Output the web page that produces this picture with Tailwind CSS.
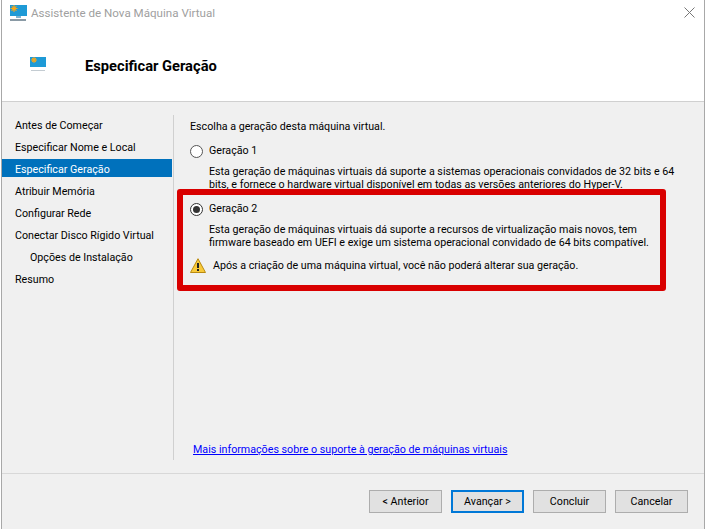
<!DOCTYPE html>
<html lang="pt">
<head>
<meta charset="UTF-8">
<title>Assistente de Nova Máquina Virtual</title>
<script src="https://cdn.jsdelivr.net/npm/@tailwindcss/browser@4"></script>
</head>
<body class="bg-white font-['Roboto',sans-serif] text-[10.7px] leading-[14px] text-black overflow-hidden">
<div class="w-[704px] h-[529px] ml-[1px] flex flex-col border-l border-r border-[#a8a8a8] bg-white">

    <!-- barra de titulo -->
    <div class="h-[26px] flex items-center shrink-0 pl-[8px] pr-[9px]">
        <svg width="17" height="16" viewBox="0 0 17 16">
            <rect x="0" y="0" width="17" height="11" fill="#1e9ad6"/>
            <path d="M4 0V7M0.5 3.5H7.5M1.5 1L6.5 6M6.5 1L1.5 6" stroke="#f5a81c" stroke-width="1"/>
            <circle cx="4" cy="3.5" r="2" fill="#f5a81c"/>
            <rect x="6" y="11" width="5" height="2" fill="#7fb4d0"/>
            <rect x="0" y="14" width="16" height="2" fill="#8a9aa5"/>
        </svg>
        <span class="ml-[4px] text-[#a0a0a0] text-[11.6px]">Assistente de Nova Máquina Virtual</span>
        <svg class="ml-auto mb-[2px]" width="11" height="11" viewBox="0 0 11 11"><path d="M0.5 0.5L10.5 10.5M10.5 0.5L0.5 10.5" stroke="#777" stroke-width="1"/></svg>
    </div>

    <!-- cabecalho -->
    <div class="h-[76px] flex items-center shrink-0 border-b border-[#d0d0d0] pl-[28px]">
        <svg width="16" height="15" viewBox="0 0 16 15" class="mt-[2px]">
            <rect x="0" y="0" width="16" height="10" fill="#1e9ad6"/>
            <path d="M4 0V6M1 3H7M2 1L6 5M6 1L2 5" stroke="#f5a81c" stroke-width="1"/>
            <circle cx="4" cy="3" r="1.7" fill="#f5a81c"/>
            <rect x="1" y="13" width="14" height="1" fill="#c4ccd2"/>
        </svg>
        <h1 class="ml-[39px] mt-[4px] text-[14.7px] font-bold">Especificar Geração</h1>
    </div>

    <!-- corpo -->
    <div class="flex-1 bg-[#f0f0f0] flex flex-col">
        <div class="flex-1 flex pt-[13px] pb-[13px]">
            <ul class="w-[172px] shrink-0 border-r border-[#d0d0d0]">
                <li class="h-[18px] mb-[4px] pt-[4px] pl-[13px]">Antes de Começar</li>
                <li class="h-[18px] mb-[4px] pt-[4px] pl-[13px]">Especificar Nome e Local</li>
                <li class="h-[18px] mb-[4px] pt-[4px] pl-[13px] mr-[1px] bg-[#0071bc] text-white">Especificar Geração</li>
                <li class="h-[18px] mb-[4px] pt-[4px] pl-[13px]">Atribuir Memória</li>
                <li class="h-[18px] mb-[4px] pt-[4px] pl-[13px]">Configurar Rede</li>
                <li class="h-[18px] mb-[4px] pt-[4px] pl-[13px]">Conectar Disco Rígido Virtual</li>
                <li class="h-[18px] mb-[4px] pt-[4px] pl-[28px]">Opções de Instalação</li>
                <li class="h-[18px] mb-[4px] pt-[4px] pl-[13px]">Resumo</li>
            </ul>
            <div class="flex-1 flex flex-col pl-[16px]">
                <p class="mt-[5px]">Escolha a geração desta máquina virtual.</p>
                <label class="flex items-center mt-[10px]">
                    <span class="w-[13px] h-[13px] rounded-full border border-[#555] bg-white"></span>
                    <span class="ml-[6px]">Geração 1</span>
                </label>
                <p class="ml-[19px] mt-[7px] w-[470px] leading-[13px]">Esta geração de máquinas virtuais dá suporte a sistemas operacionais convidados de 32 bits e 64 bits, e fornece o hardware virtual disponível em todas as versões anteriores do Hyper-V.</p>
                <div class="relative mt-[11px]">
                    <div class="absolute -left-[13px] -top-[13px] w-[489px] h-[102px] border-[6px] border-[#d90000] rounded-[3px]"></div>
                    <label class="flex items-center">
                        <span class="w-[13px] h-[13px] rounded-full border border-[#333] bg-white flex items-center justify-center"><span class="w-[7px] h-[7px] rounded-full bg-[#333]"></span></span>
                        <span class="ml-[6px]">Geração 2</span>
                    </label>
                    <p class="ml-[19px] mt-[7px] w-[470px] leading-[13px]">Esta geração de máquinas virtuais dá suporte a recursos de virtualização mais novos, tem firmware baseado em UEFI e exige um sistema operacional convidado de 64 bits compatível.</p>
                    <div class="flex items-center mt-[9px]">
                        <svg width="16" height="15" viewBox="0 0 16 15"><path d="M8 0.7L15.5 14.5H0.5Z" fill="#f8c93a" stroke="#b98a10" stroke-width="1"/><rect x="7" y="5" width="2" height="5" fill="#222"/><rect x="7" y="11" width="2" height="2" fill="#222"/></svg>
                        <span class="ml-[7px]">Após a criação de uma máquina virtual, você não poderá alterar sua geração.</span>
                    </div>
                </div>
                <a class="mt-auto mb-[3px] ml-[3px] text-[#0000ff] underline">Mais informações sobre o suporte à geração de máquinas virtuais</a>
            </div>
        </div>
        <!-- botoes -->
        <div class="h-[56px] shrink-0 border-t border-[#d8d8d8] flex justify-end gap-[9px] pt-[16px] pr-[16px]">
            <button class="w-[73px] h-[23px] bg-[#e1e1e1] border border-[#adadad]">&lt; Anterior</button>
            <button class="w-[73px] h-[23px] bg-[#e1e1e1] border-2 border-[#0078d7]">Avançar &gt;</button>
            <button class="w-[73px] h-[23px] bg-[#e1e1e1] border border-[#adadad]">Concluir</button>
            <button class="w-[73px] h-[23px] bg-[#e1e1e1] border border-[#adadad]">Cancelar</button>
        </div>
    </div>
</div>
</body>
</html>
